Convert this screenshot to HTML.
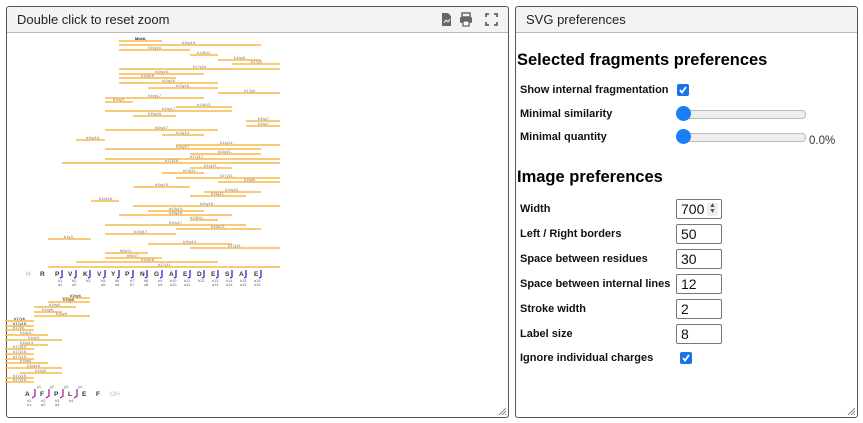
<!DOCTYPE html>
<html><head><meta charset="utf-8"><style>
body{margin:0;width:863px;height:423px;background:#fff;font-family:"Liberation Sans",Arial,sans-serif;position:relative;overflow:hidden}
.panel{position:absolute;border:1px solid #555;border-radius:3px;background:#fff;box-sizing:border-box}
.hdr{position:absolute;left:0;right:0;top:0;height:25px;background:#f3f3f3;border-bottom:1px solid #bbb;font-size:13px;color:#222;line-height:25px;padding-left:10px;border-radius:3px 3px 0 0}
.a{position:absolute}
.lbl{position:absolute;left:4px;font-size:11px;font-weight:bold;color:#111}
.inp{position:absolute;left:160px;width:46px;height:20px;border:1px solid #777;border-radius:2px;box-sizing:border-box;font-size:14px;line-height:18px;padding-left:4px;color:#111}
.cb{position:absolute;width:12px;height:12px;background:#1a73e8;border-radius:2px}
.cb svg{position:absolute;left:1px;top:1px}
.sl{position:absolute;left:162px;width:126px;height:7px;border:1px solid #bbb;border-radius:4px;background:#eee}
.th{position:absolute;left:160px;width:15px;height:15px;border-radius:50%;background:#1a7ef5}
.rz{position:absolute;right:2px;bottom:2px}
</style></head><body>
<div class="panel" style="left:6px;top:6px;width:503px;height:412px">
<div class="hdr">Double click to reset zoom</div>
<svg class="a" style="left:433px;top:5px" width="64" height="15" viewBox="0 0 64 15">
<path d="M2 1h6l3 3v10H2z" fill="#666"/><path d="M4 11l2-3 2 2 2-3" stroke="#fff" fill="none" stroke-width="1"/>
<rect x="22" y="1" width="8" height="4" fill="none" stroke="#666" stroke-width="1.5"/><rect x="20" y="5" width="12" height="6" rx="1.5" fill="#666"/><rect x="23" y="9" width="6" height="5" fill="#fff" stroke="#666" stroke-width="1.3"/>
<path d="M46 5V2h3M54 2h3v3M57 10v3h-3M49 13h-3v-3" stroke="#666" stroke-width="1.8" fill="none"/>
</svg>
<svg class="rz" width="8" height="8"><path d="M8 1L1 8M8 4L4 8M8 7L7 8" stroke="#888"/></svg>
</div>
<svg class="a" style="left:0;top:0" width="510" height="423">
<g stroke="#f8b94a" stroke-width="1.5" id="ln">
<line x1="119" x2="162" y1="41" y2="41"/><line x1="119" x2="261" y1="45" y2="45"/><line x1="119" x2="190" y1="50" y2="50"/><line x1="190" x2="218" y1="55" y2="55"/><line x1="218" x2="261" y1="60" y2="60"/><line x1="232" x2="280" y1="64" y2="64"/><line x1="119" x2="280" y1="69" y2="69"/><line x1="119" x2="204" y1="74" y2="74"/><line x1="119" x2="176" y1="78" y2="78"/><line x1="119" x2="218" y1="83" y2="83"/><line x1="148" x2="218" y1="88" y2="88"/><line x1="218" x2="280" y1="93" y2="93"/><line x1="105" x2="204" y1="98" y2="98"/><line x1="105" x2="133" y1="102" y2="102"/><line x1="176" x2="232" y1="107" y2="107"/><line x1="105" x2="232" y1="111" y2="111"/><line x1="133" x2="176" y1="116" y2="116"/><line x1="246" x2="280" y1="121" y2="121"/><line x1="246" x2="280" y1="126" y2="126"/><line x1="105" x2="218" y1="130" y2="130"/><line x1="162" x2="204" y1="135" y2="135"/><line x1="76" x2="105" y1="140" y2="140"/>
<line x1="176" x2="280" y1="145" y2="145"/><line x1="105" x2="261" y1="149" y2="149"/><line x1="190" x2="261" y1="154" y2="154"/><line x1="105" x2="280" y1="159" y2="159"/><line x1="62" x2="280" y1="163" y2="163"/><line x1="190" x2="232" y1="168" y2="168"/><line x1="162" x2="204" y1="173" y2="173"/><line x1="176" x2="280" y1="178" y2="178"/><line x1="218" x2="280" y1="182" y2="182"/><line x1="133" x2="190" y1="187" y2="187"/><line x1="204" x2="261" y1="192" y2="192"/><line x1="190" x2="246" y1="196" y2="196"/><line x1="91" x2="119" y1="201" y2="201"/><line x1="133" x2="280" y1="206" y2="206"/><line x1="148" x2="204" y1="211" y2="211"/><line x1="119" x2="232" y1="215" y2="215"/><line x1="190" x2="218" y1="220" y2="220"/><line x1="105" x2="246" y1="225" y2="225"/><line x1="176" x2="261" y1="229" y2="229"/><line x1="105" x2="176" y1="234" y2="234"/><line x1="48" x2="91" y1="239" y2="239"/><line x1="148" x2="232" y1="244" y2="244"/><line x1="190" x2="280" y1="248" y2="248"/><line x1="105" x2="148" y1="253" y2="253"/><line x1="105" x2="162" y1="258" y2="258"/><line x1="76" x2="218" y1="262" y2="262"/><line x1="48" x2="280" y1="267" y2="267"/>
<line x1="62" x2="90" y1="298" y2="298"/><line x1="48" x2="90" y1="302" y2="302"/><line x1="34" x2="76" y1="307" y2="307"/><line x1="34" x2="62" y1="312" y2="312"/><line x1="34" x2="90" y1="316" y2="316"/><line x1="5" x2="34" y1="321" y2="321"/><line x1="5" x2="34" y1="326" y2="326"/><line x1="5" x2="34" y1="330" y2="330"/><line x1="5" x2="48" y1="335" y2="335"/><line x1="5" x2="62" y1="340" y2="340"/><line x1="20" x2="48" y1="345" y2="345"/><line x1="5" x2="34" y1="349" y2="349"/><line x1="5" x2="34" y1="354" y2="354"/><line x1="5" x2="34" y1="359" y2="359"/><line x1="5" x2="48" y1="363" y2="363"/><line x1="5" x2="62" y1="368" y2="368"/><line x1="20" x2="62" y1="373" y2="373"/><line x1="5" x2="34" y1="378" y2="378"/><line x1="5" x2="34" y1="382" y2="382"/>
</g>
<g font-size="4" fill="#777" font-family="Liberation Sans">
<text x="135" y="40" font-weight="bold" fill="#222">Mb16.</text><text x="182" y="44">b1by16.</text><text x="148" y="49">b1by16.</text><text x="197" y="54">b13b11.</text><text x="234" y="59">b1by6.</text><text x="251" y="63">b17y6.</text><text x="193" y="68">b17y16.</text><text x="155" y="73">b1by16.</text><text x="141" y="77">b1by16.</text><text x="162" y="82">b1by16.</text><text x="176" y="87">b13y16.</text><text x="244" y="92">b17y6.</text><text x="148" y="97">b1by17.</text><text x="113" y="101">b1by3.</text><text x="197" y="106">b14b13.</text><text x="162" y="110">b1by17.</text><text x="148" y="115">b1by16.</text><text x="258" y="120">b1by7.</text><text x="258" y="125">b1by7.</text><text x="155" y="129">b1by17.</text><text x="176" y="134">b13y13.</text><text x="86" y="139">b1by16.</text>
<text x="220" y="144">b14y11.</text><text x="176" y="148">b1by17.</text><text x="218" y="153">b16y11.</text><text x="190" y="158">b17y17.</text><text x="165" y="162">b17y16.</text><text x="204" y="167">b14y11.</text><text x="183" y="172">b13y11.</text><text x="220" y="177">b17y11.</text><text x="244" y="181">b1by6.</text><text x="155" y="186">b1by15.</text><text x="225" y="191">b1by16.</text><text x="211" y="195">b16y11.</text><text x="99" y="200">b1by16.</text><text x="200" y="205">b1by16.</text><text x="169" y="210">b13y14.</text><text x="169" y="214">b1by16.</text><text x="190" y="219">b13b11.</text><text x="169" y="224">b1by17.</text><text x="211" y="228">b16b13.</text><text x="134" y="233">b1by17.</text><text x="64" y="238">b1y3.</text><text x="183" y="243">b1by14.</text><text x="228" y="247">b17y11.</text><text x="120" y="252">bBy11.</text><text x="127" y="257">bBy17.</text><text x="141" y="261">b1by16.</text><text x="158" y="266">b17y11.</text>
<text x="70" y="297" fill="#222">b1by6.</text><text x="63" y="301" fill="#222">b1by6.</text><text x="49" y="306">b1by6.</text><text x="42" y="311">b1by6.</text><text x="56" y="315">b1by6.</text><text x="14" y="320" fill="#222">b17y6.</text><text x="13" y="325" fill="#222">b17y16.</text><text x="13" y="329">b17y6.</text><text x="20" y="334">b1by3.</text><text x="28" y="339">b1by3.</text><text x="20" y="344">b1by14.</text><text x="13" y="348">b17y13.</text><text x="13" y="353">b17y16.</text><text x="13" y="358">b17y16.</text><text x="20" y="362">b1by6.</text><text x="27" y="367">b1by16.</text><text x="35" y="372">b1by6.</text><text x="13" y="377">b17y16.</text><text x="13" y="381">b17y16.</text>
</g>
<g font-size="6.5" font-weight="bold" fill="#333" font-family="Liberation Sans">
<text x="26" y="276" fill="#aaa" font-weight="normal">H</text><text x="40" y="276">R</text><text x="55" y="276">P</text><text x="68" y="276">V</text><text x="83" y="276">K</text><text x="97" y="276">V</text><text x="111" y="276">Y</text><text x="125" y="276">P</text><text x="140" y="276">N</text><text x="154" y="276">G</text><text x="169" y="276">A</text><text x="183" y="276">E</text><text x="197" y="276">D</text><text x="211" y="276">E</text><text x="225" y="276">S</text><text x="239" y="276">A</text><text x="254" y="276">E</text>
<text x="25" y="396">A</text><text x="40" y="396">F</text><text x="54" y="396">P</text><text x="68" y="396">L</text><text x="82" y="396">E</text><text x="96" y="396">F</text><text x="110" y="396" fill="#bbb" font-weight="normal">OH</text>
</g>
<g stroke="#2a2ad0" stroke-width="1.3" fill="none">
<path d="M62 270v7l-2 1M76 270v7l-2 1M90 270v7l-2 1M105 270v7l-2 1M119 270v7l-2 1M133 270v7l-2 1M147 270v7l-2 1M162 270v7l-2 1M176 270v7l-2 1M190 270v7l-2 1M204 270v7l-2 1M218 270v7l-2 1M232 270v7l-2 1M246 270v7l-2 1M261 270v7l-2 1"/>
<path d="M35 389v7l-3 2M49 389v7l-3 2M63 389v7l-3 2M77 389v7l-3 2" stroke="#a02a9a"/>
</g>
<g font-size="3.8" fill="#666"><text x="58" y="282">b1.</text><text x="72" y="282">b2.</text><text x="86" y="282">b3.</text><text x="101" y="282">b5.</text><text x="115" y="282">b6.</text><text x="130" y="282">b7.</text><text x="144" y="282">b8.</text><text x="158" y="282">b9.</text><text x="170" y="282">b10.</text><text x="184" y="282">b11.</text><text x="198" y="282">b12.</text><text x="212" y="282">b13.</text><text x="226" y="282">b14.</text><text x="240" y="282">b15.</text><text x="254" y="282">a16.</text>
<text x="58" y="286">a1.</text><text x="72" y="286">a2.</text><text x="101" y="286">a5.</text><text x="115" y="286">a6.</text><text x="130" y="286">b7.</text><text x="144" y="286">a8.</text><text x="158" y="286">b9.</text><text x="170" y="286">a10.</text><text x="184" y="286">a11.</text><text x="212" y="286">a13.</text><text x="226" y="286">a14.</text><text x="240" y="286">a15.</text><text x="254" y="286">b16.</text>
<text x="37" y="388">y1.</text><text x="50" y="388">y2.</text><text x="64" y="388">y3.</text><text x="78" y="388">y4.</text><text x="27" y="402">a1.</text><text x="41" y="402">b2.</text><text x="55" y="402">b3.</text><text x="69" y="402">b4.</text><text x="27" y="406">b1.</text><text x="41" y="406">a2.</text><text x="55" y="406">a3.</text></g>
</svg>
<div class="panel" style="left:515px;top:6px;width:343px;height:412px">
<div class="hdr">SVG preferences</div>
<svg class="rz" width="8" height="8"><path d="M8 1L1 8M8 4L4 8M8 7L7 8" stroke="#888"/></svg>
<div class="a" style="left:1px;top:44px;font-size:16.5px;font-weight:bold;color:#000">Selected fragments preferences</div>
<div class="lbl" style="top:77px">Show internal fragmentation</div>
<div class="cb" style="left:161px;top:77px"><svg width="10" height="10"><path d="M2 5l2 2.5L8 2" stroke="#fff" stroke-width="1.8" fill="none"/></svg></div>
<div class="lbl" style="top:101px">Minimal similarity</div>
<div class="sl" style="top:103px"></div><div class="th" style="top:99px"></div>
<div class="lbl" style="top:124px">Minimal quantity</div>
<div class="sl" style="top:126px"></div><div class="th" style="top:122px"></div>
<div class="a" style="left:293px;top:128px;font-size:11.5px;color:#333">0.0%</div>
<div class="a" style="left:1px;top:161px;font-size:16.5px;font-weight:bold;color:#000">Image preferences</div>
<div class="lbl" style="top:196px">Width</div><div class="inp" style="top:192px">700<span style="position:absolute;right:3px;top:3px;width:11px;height:13px;background:#eee;font-size:7px;line-height:6px;text-align:center;color:#555">▲<br>▼</span></div>
<div class="lbl" style="top:221px">Left / Right borders</div><div class="inp" style="top:217px">50</div>
<div class="lbl" style="top:246px">Space between residues</div><div class="inp" style="top:242px">30</div>
<div class="lbl" style="top:271px">Space between internal lines</div><div class="inp" style="top:267px">12</div>
<div class="lbl" style="top:296px">Stroke width</div><div class="inp" style="top:292px">2</div>
<div class="lbl" style="top:321px">Label size</div><div class="inp" style="top:317px">8</div>
<div class="lbl" style="top:345px">Ignore individual charges</div>
<div class="cb" style="left:164px;top:345px"><svg width="10" height="10"><path d="M2 5l2 2.5L8 2" stroke="#fff" stroke-width="1.8" fill="none"/></svg></div>
</div>
</body></html>
